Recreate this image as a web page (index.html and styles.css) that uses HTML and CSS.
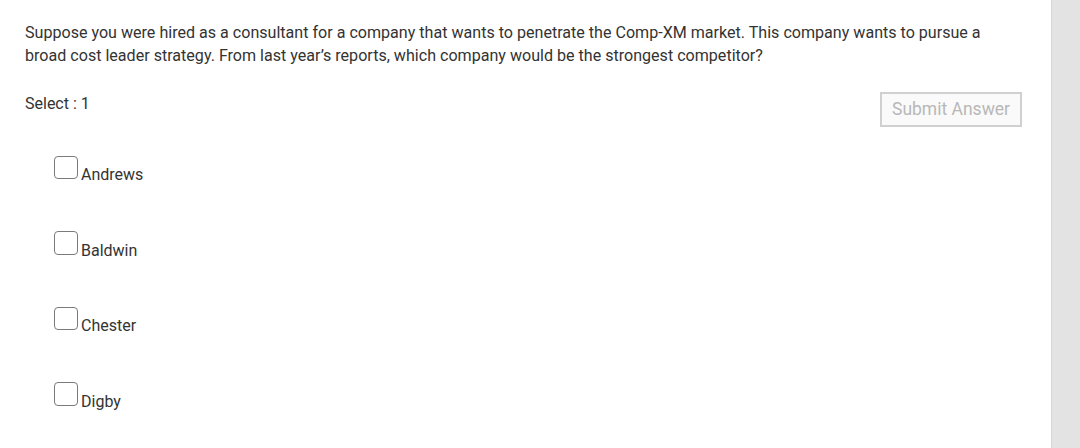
FILE: index.html
```html
<!DOCTYPE html>
<html lang="en">
<head>
<meta charset="utf-8">
<link rel="stylesheet" href="styles.css">
</head>
<body>
<div class="page">
  <main class="content">
    <p class="question">Suppose you were hired as a consultant for a company that wants to penetrate the Comp-XM market. This company wants to pursue a broad cost leader strategy. From last year’s reports, which company would be the strongest competitor?</p>
    <div class="toolbar">
      <span class="select">Select : 1</span>
      <button class="submit" disabled>Submit Answer</button>
    </div>
    <ul class="options">
      <li class="option"><span class="box"></span><span class="label">Andrews</span></li>
      <li class="option"><span class="box"></span><span class="label">Baldwin</span></li>
      <li class="option"><span class="box"></span><span class="label">Chester</span></li>
      <li class="option"><span class="box"></span><span class="label">Digby</span></li>
    </ul>
  </main>
  <aside class="side"></aside>
</div>
</body>
</html>
```
FILE: styles.css
```css
html, body {
  margin: 0;
  padding: 0;
  height: 100%;
  background: #fff;
}
body {
  font-family: Roboto, "Liberation Sans", sans-serif;
  color: #333;
  overflow: hidden;
}
.page {
  display: flex;
  height: 448px;
}
.content {
  flex: 1;
  padding: 21px 29px 0 25px;
}
.side {
  width: 28px;
  background: #e3e3e3;
  border-left: 1px solid #d6d6d6;
}
.question {
  margin: 0;
  font-size: 16.08px;
  line-height: 23px;
}
.toolbar {
  display: flex;
  justify-content: space-between;
  align-items: flex-start;
  margin-top: 25px;
}
.select {
  font-size: 16px;
  line-height: 22px;
  padding-top: 1px;
}
.submit {
  font-family: Roboto, "Liberation Sans", sans-serif;
  font-size: 17.5px;
  color: #b8b8b8;
  background: #fafafa;
  border: 2px solid #d0d0d0;
  padding: 0 0 1px;
  height: 35px;
  width: 142px;
}
.options {
  list-style: none;
  margin: 28px 0 0 29px;
  padding: 0;
  display: flex;
  flex-direction: column;
  gap: 51.67px;
}
.option {
  display: flex;
  align-items: flex-end;
  height: 24px;
}
.box {
  width: 21.5px;
  height: 21.5px;
  border: 1.5px solid #7a7a7a;
  border-radius: 4px;
  box-sizing: content-box;
}
.label {
  font-size: 16px;
  line-height: 18px;
  margin-left: 3.5px;
  margin-bottom: -5px;
}
```
